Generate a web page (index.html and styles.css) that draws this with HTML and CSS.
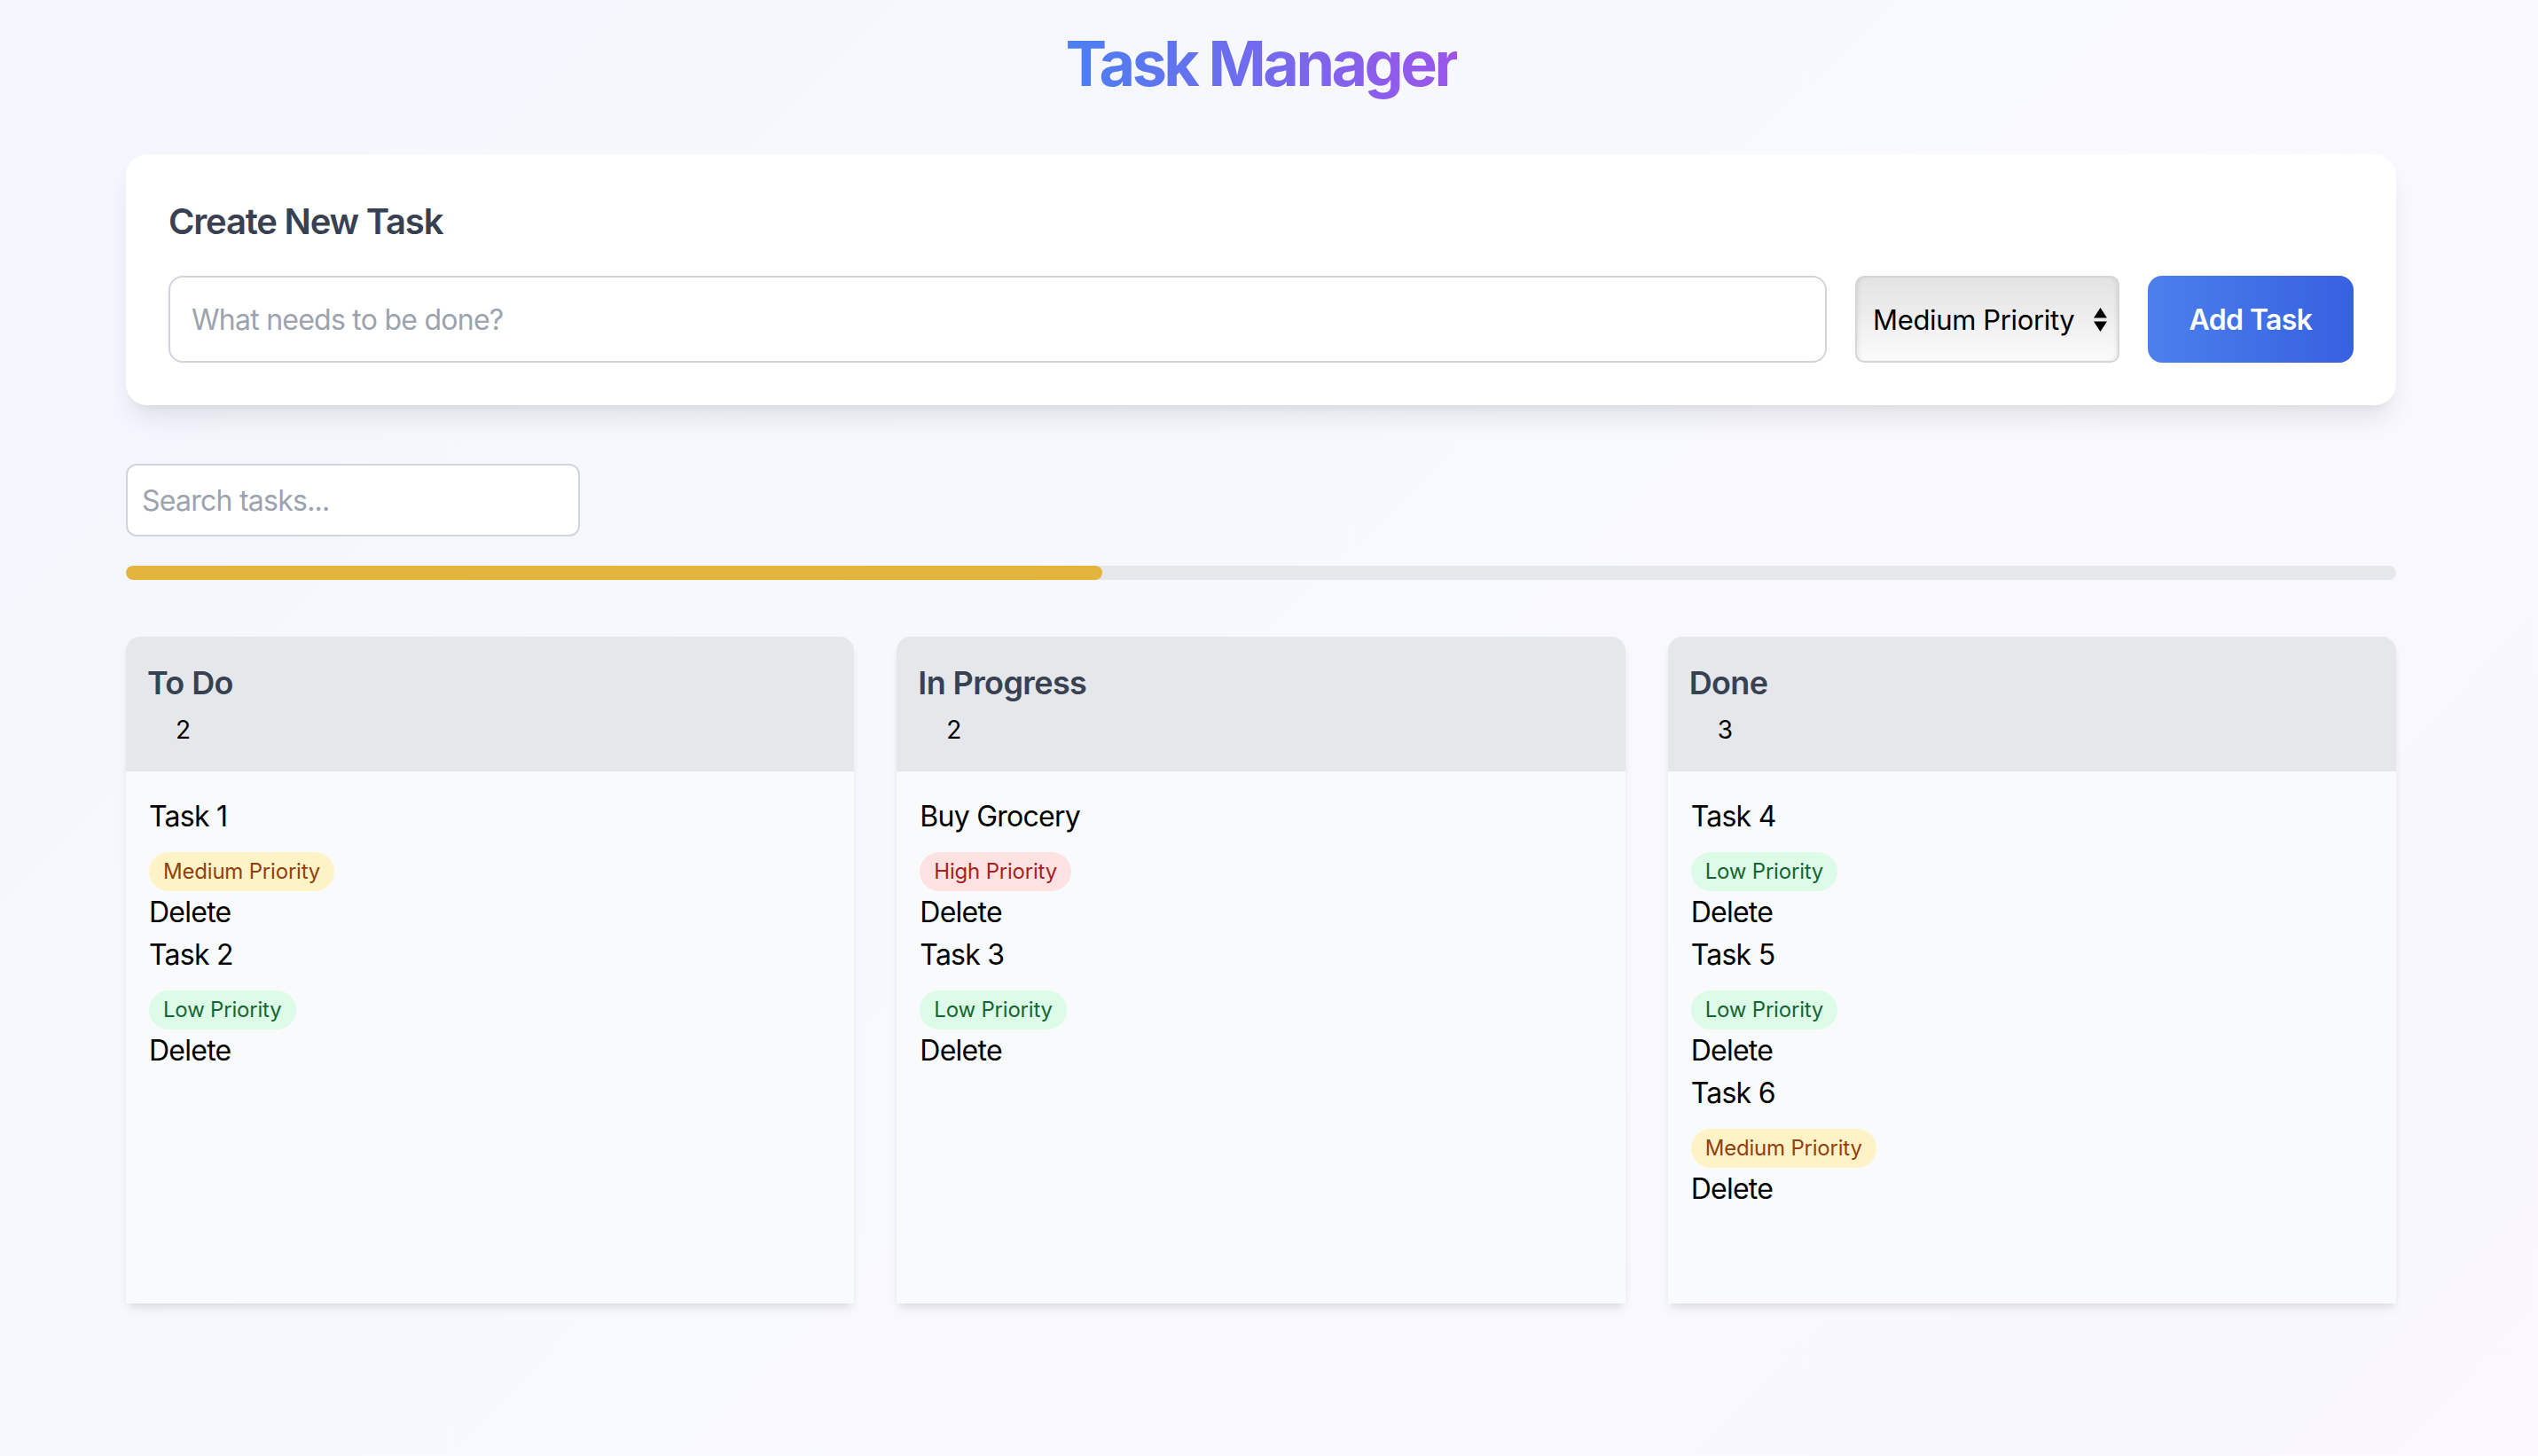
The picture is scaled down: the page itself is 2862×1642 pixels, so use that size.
FILE: index.html
```html
<!DOCTYPE html>
<html lang="en">
<head>
<meta charset="utf-8">
<title>Task Manager</title>
<link rel="stylesheet" href="styles.css">
</head>
<body>
<div class="app">
  <header class="page-header">
    <h1 class="title">Task Manager</h1>
  </header>

  <section class="create-card">
    <h2 class="create-title">Create New Task</h2>
    <div class="create-row">
      <input class="task-input" type="text" placeholder="What needs to be done?">
      <div class="select-wrap">
        <select class="priority-select">
          <option>Low Priority</option>
          <option selected>Medium Priority</option>
          <option>High Priority</option>
        </select>
        <svg class="select-arrows" width="15" height="27" viewBox="0 0 15 27" aria-hidden="true">
          <path d="M7.5 0 L15 11.5 L0 11.5 Z" fill="#000"/>
          <path d="M0 15.5 L15 15.5 L7.5 27 Z" fill="#000"/>
        </svg>
      </div>
      <button class="add-btn" type="button">Add Task</button>
    </div>
  </section>

  <input class="search-input" type="text" placeholder="Search tasks...">

  <div class="progress">
    <div class="progress-fill" style="width: 43%"></div>
  </div>

  <div class="board">
    <div class="column">
      <div class="column-header">
        <h3 class="column-title">To Do</h3>
        <span class="count">2</span>
      </div>
      <div class="column-body">
        <div class="task">
          <div class="task-title">Task 1</div>
          <div class="badges"><span class="badge badge-medium">Medium Priority</span></div>
          <button class="delete-btn" type="button">Delete</button>
        </div>
        <div class="task">
          <div class="task-title">Task 2</div>
          <div class="badges"><span class="badge badge-low">Low Priority</span></div>
          <button class="delete-btn" type="button">Delete</button>
        </div>
      </div>
    </div>

    <div class="column">
      <div class="column-header">
        <h3 class="column-title">In Progress</h3>
        <span class="count">2</span>
      </div>
      <div class="column-body">
        <div class="task">
          <div class="task-title">Buy Grocery</div>
          <div class="badges"><span class="badge badge-high">High Priority</span></div>
          <button class="delete-btn" type="button">Delete</button>
        </div>
        <div class="task">
          <div class="task-title">Task 3</div>
          <div class="badges"><span class="badge badge-low">Low Priority</span></div>
          <button class="delete-btn" type="button">Delete</button>
        </div>
      </div>
    </div>

    <div class="column">
      <div class="column-header">
        <h3 class="column-title">Done</h3>
        <span class="count">3</span>
      </div>
      <div class="column-body">
        <div class="task">
          <div class="task-title">Task 4</div>
          <div class="badges"><span class="badge badge-low">Low Priority</span></div>
          <button class="delete-btn" type="button">Delete</button>
        </div>
        <div class="task">
          <div class="task-title">Task 5</div>
          <div class="badges"><span class="badge badge-low">Low Priority</span></div>
          <button class="delete-btn" type="button">Delete</button>
        </div>
        <div class="task">
          <div class="task-title">Task 6</div>
          <div class="badges"><span class="badge badge-medium">Medium Priority</span></div>
          <button class="delete-btn" type="button">Delete</button>
        </div>
      </div>
    </div>
  </div>
</div>
</body>
</html>
```

FILE: styles.css
```css
* {
  box-sizing: border-box;
}

html, body {
  margin: 0;
  padding: 0;
}

body {
  min-height: 100vh;
  font-family: Inter, "Noto Sans", "Liberation Sans", sans-serif;
  font-size: 32px;
  line-height: 48px;
  color: #000;
  background: linear-gradient(135deg, #f3f6fd 0%, #f8f9fe 50%, #faf7fe 100%);
  padding-right: 18px;
}

.app {
  width: 2560px;
  margin: 0 auto;
  padding-top: 32px;
}

.page-header {
  display: flex;
  justify-content: center;
  margin-bottom: 62px;
}

.title {
  margin: 0;
  font-size: 70px;
  line-height: 80px;
  font-weight: 700;
  letter-spacing: -3.5px;
  background: linear-gradient(90deg, #4a80f0 0%, #9b55ea 100%);
  -webkit-background-clip: text;
  background-clip: text;
  color: transparent;
}

.create-card {
  background: #fff;
  border-radius: 24px;
  padding: 48px;
  box-shadow: 0 20px 30px -6px rgba(0, 0, 0, 0.09), 0 8px 12px -8px rgba(0, 0, 0, 0.08);
  margin-bottom: 66px;
}

.create-title {
  margin: 0 0 33px;
  font-size: 40px;
  line-height: 56px;
  font-weight: 600;
  color: #374151;
  letter-spacing: -1.2px;
}

.create-row {
  display: flex;
  gap: 32px;
  align-items: stretch;
}

.task-input {
  flex: 1;
  height: 98px;
  border: 2px solid #d1d5db;
  border-radius: 16px;
  padding: 0 24px;
  font-family: inherit;
  font-size: 32px;
  color: #111827;
  background: #fff;
  outline: none;
  letter-spacing: -0.75px;
}

.task-input::placeholder,
.search-input::placeholder {
  color: #9ca3af;
}

.select-wrap {
  position: relative;
  width: 298px;
  flex: none;
}

.priority-select {
  -webkit-appearance: none;
  appearance: none;
  width: 100%;
  height: 98px;
  border: 2px solid #d4d6da;
  border-radius: 10px;
  padding: 0 0 0 18px;
  font-family: Inter, "Liberation Sans", sans-serif;
  font-size: 31px;
  letter-spacing: -0.35px;
  color: #000;
  background: linear-gradient(180deg, #e3e3e3 0%, #ececec 40%, #fbfbfb 100%);
  box-shadow: inset 4px 0 4px -2px rgba(0, 0, 0, 0.07), inset -4px 0 4px -2px rgba(0, 0, 0, 0.07);
  outline: none;
}

.select-arrows {
  position: absolute;
  right: 14px;
  top: 36px;
}

.add-btn {
  flex: none;
  width: 232px;
  height: 98px;
  border: none;
  border-radius: 16px;
  background: linear-gradient(90deg, #4c80ec 0%, #3660e0 100%);
  color: #fff;
  font-family: inherit;
  font-size: 32px;
  font-weight: 600;
  letter-spacing: -0.6px;
  padding: 0;
  white-space: nowrap;
}

.search-input {
  display: block;
  width: 512px;
  height: 82px;
  border: 2px solid #d1d5db;
  border-radius: 12px;
  padding: 0 16px;
  font-family: inherit;
  font-size: 32px;
  background: #fff;
  outline: none;
  margin: 0 0 33px;
  letter-spacing: -0.75px;
}

.progress {
  height: 16px;
  border-radius: 9999px;
  background: #e5e7eb;
  overflow: hidden;
  margin-bottom: 64px;
}

.progress-fill {
  height: 100%;
  background: #e2b43d;
  border-radius: 9999px;
}

.board {
  display: grid;
  grid-template-columns: repeat(3, 1fr);
  gap: 48px;
}

.column {
  border-radius: 16px 16px 0 0;
  background: #f9fafb;
  box-shadow: 0 8px 12px -2px rgba(0, 0, 0, 0.08), 0 4px 8px -4px rgba(0, 0, 0, 0.08);
}

.column-header {
  background: #e5e7eb;
  border-radius: 16px 16px 0 0;
  padding: 24px;
}

.column-title {
  margin: 0;
  font-size: 36px;
  line-height: 56px;
  font-weight: 600;
  color: #374151;
  letter-spacing: -0.6px;
}

.count {
  font-size: 28px;
  line-height: 40px;
  padding: 0 16px;
  margin-left: 16px;
}

.column-body {
  min-height: 600px;
  padding: 27px 24px 24px 26px;
}

.task-title {
  font-size: 32px;
  line-height: 48px;
  letter-spacing: -0.75px;
}

.badges {
  display: flex;
  margin-top: 16px;
}

.badge {
  font-size: 24px;
  line-height: 32px;
  padding: 6px 16px;
  border-radius: 9999px;
  letter-spacing: -0.2px;
}

.badge-medium {
  background: #fef3c7;
  color: #92400e;
}

.badge-low {
  background: #dcfce7;
  color: #166534;
}

.badge-high {
  background: #fee2e2;
  color: #a52222;
}

.delete-btn {
  display: block;
  padding: 0;
  margin: 0;
  border: none;
  background: none;
  font-family: inherit;
  font-size: 32px;
  line-height: 48px;
  color: #000;
  letter-spacing: -0.75px;
  text-align: left;
}
```
